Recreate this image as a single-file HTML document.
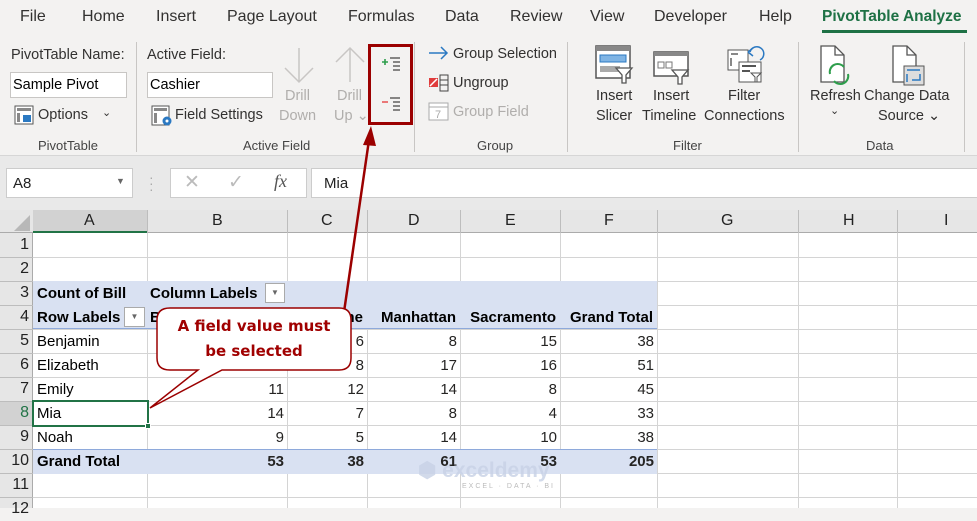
<!DOCTYPE html>
<html><head><meta charset="utf-8"><style>
*{margin:0;padding:0;box-sizing:border-box}
body{width:977px;height:508px;overflow:hidden;background:#f3f2f1;font-family:"Liberation Sans",sans-serif;position:relative;color:#252423}
.a{position:absolute;white-space:nowrap}
.m{font-size:16px;top:8px;color:#323130}
.r{font-size:14.5px;color:#323130}
.g{color:#b0aeac}
.gl{font-size:13px;color:#444;top:138px}
.sep{position:absolute;top:42px;width:1px;height:110px;background:#c8c6c4}
.cell{position:absolute;font-size:15px;color:#000;height:24px;line-height:24px}
.b{font-weight:bold}
</style></head><body>
<!-- menu -->
<div class="a m" style="left:20px">File</div>
<div class="a m" style="left:82px">Home</div>
<div class="a m" style="left:156px">Insert</div>
<div class="a m" style="left:227px">Page Layout</div>
<div class="a m" style="left:348px">Formulas</div>
<div class="a m" style="left:445px">Data</div>
<div class="a m" style="left:510px">Review</div>
<div class="a m" style="left:590px">View</div>
<div class="a m" style="left:654px">Developer</div>
<div class="a m" style="left:759px">Help</div>
<div class="a m" style="left:822px;color:#1e7145;font-weight:bold;font-size:15.5px">PivotTable Analyze</div>
<div class="a" style="left:822px;top:30px;width:145px;height:3px;background:#1e7145"></div>

<!-- ribbon -->
<div class="a r" style="left:11px;top:47px">PivotTable Name:</div>
<div class="a" style="left:10px;top:72px;width:117px;height:26px;background:#fff;border:1px solid #c8c6c4"></div>
<div class="a r" style="left:13px;top:77px;color:#000">Sample Pivot</div>
<svg class="a" style="left:14px;top:105px" width="20" height="20"><rect x="1" y="1" width="18" height="18" fill="#fff" stroke="#555"/><rect x="3" y="3" width="14" height="3" fill="#888"/><rect x="3" y="8" width="3" height="9" fill="#888"/><rect x="9" y="10" width="8" height="7" fill="#2b79c2"/></svg>
<div class="a r" style="left:38px;top:107px">Options</div>
<div class="a r" style="left:102px;top:106px;font-size:11px">&#8964;</div>
<div class="a gl" style="left:38px">PivotTable</div>
<div class="sep" style="left:136px"></div>

<div class="a r" style="left:147px;top:47px">Active Field:</div>
<div class="a" style="left:147px;top:72px;width:126px;height:26px;background:#fff;border:1px solid #c8c6c4"></div>
<div class="a r" style="left:150px;top:77px;color:#000">Cashier</div>
<svg class="a" style="left:151px;top:105px" width="22" height="22"><rect x="1" y="1" width="17" height="19" fill="#fff" stroke="#555"/><rect x="3" y="3" width="13" height="3" fill="#888"/><rect x="3" y="8" width="3" height="10" fill="#888"/><circle cx="16" cy="16" r="4.5" fill="#2b79c2"/><circle cx="16" cy="16" r="1.5" fill="#fff"/></svg>
<div class="a r" style="left:175px;top:107px">Field Settings</div>
<svg class="a" style="left:282px;top:46px" width="34" height="40"><path d="M17 2V36M3 22L17 36L31 22" fill="none" stroke="#c8c6c4" stroke-width="1.5"/></svg>
<div class="a r g" style="left:285px;top:88px">Drill</div>
<div class="a r g" style="left:279px;top:108px">Down</div>
<svg class="a" style="left:333px;top:44px" width="34" height="40"><path d="M17 38V4M3 18L17 4L31 18" fill="none" stroke="#c8c6c4" stroke-width="1.5"/></svg>
<div class="a r g" style="left:337px;top:88px">Drill</div>
<div class="a r g" style="left:334px;top:108px">Up &#8964;</div>
<svg class="a" style="left:380px;top:55px" width="24" height="60"><path d="M2 7H8M5 4V10" stroke="#2e9e4c" stroke-width="1.6"/><path d="M10 3H20M13 7H20M13 11H20M13 15H20" stroke="#444" stroke-width="1.3"/><path d="M2 47H8" stroke="#e85a5a" stroke-width="1.6"/><path d="M10 43H20M13 47H20M13 51H20M13 55H20" stroke="#444" stroke-width="1.3"/></svg>
<div class="a" style="left:368px;top:44px;width:45px;height:81px;border:3px solid #9b0000"></div>
<div class="a gl" style="left:243px">Active Field</div>
<div class="sep" style="left:414px"></div>

<svg class="a" style="left:428px;top:45px" width="22" height="16"><path d="M1 8H19M13 2L19 8L13 14" fill="none" stroke="#2b79c2" stroke-width="1.5"/></svg>
<div class="a r" style="left:453px;top:46px">Group Selection</div>
<svg class="a" style="left:428px;top:74px" width="22" height="18"><rect x="1" y="4" width="9" height="9" fill="#e03c3c"/><path d="M2 12L9 5" stroke="#fff" stroke-width="1.5"/><rect x="12" y="1" width="8" height="16" fill="none" stroke="#444"/><path d="M12 6H20M12 11H20" stroke="#444"/></svg>
<div class="a r" style="left:453px;top:75px">Ungroup</div>
<svg class="a" style="left:428px;top:101px" width="22" height="20"><rect x="1" y="2" width="19" height="17" fill="#fff" stroke="#aaa"/><path d="M1 6H20" stroke="#aaa"/><text x="7" y="17" font-size="11" fill="#aaa" font-family="Liberation Sans">7</text></svg>
<div class="a r g" style="left:453px;top:104px">Group Field</div>
<div class="a gl" style="left:477px">Group</div>
<div class="sep" style="left:567px"></div>

<svg class="a" style="left:594px;top:44px" width="40" height="40"><rect x="2" y="2" width="34" height="32" fill="#fff" stroke="#555" stroke-width="1.5"/><rect x="2" y="2" width="34" height="5" fill="#888"/><rect x="6" y="11" width="26" height="7" fill="#7fb4e4" stroke="#2b79c2"/><rect x="6" y="22" width="20" height="6" fill="#aaa"/><path d="M22 24H38L32 31V39H28V31Z" fill="#fff" stroke="#555" stroke-width="1.3"/></svg>
<div class="a r" style="left:596px;top:88px">Insert</div>
<div class="a r" style="left:596px;top:108px">Slicer</div>
<svg class="a" style="left:652px;top:50px" width="40" height="36"><rect x="2" y="2" width="34" height="24" fill="#fff" stroke="#555" stroke-width="1.5"/><rect x="2" y="2" width="34" height="4" fill="#888"/><rect x="6" y="12" width="6" height="6" fill="none" stroke="#777"/><rect x="14" y="12" width="6" height="6" fill="none" stroke="#777"/><path d="M20 20H36L30 27V34H26V27Z" fill="#fff" stroke="#555" stroke-width="1.3"/></svg>
<div class="a r" style="left:653px;top:88px">Insert</div>
<div class="a r" style="left:642px;top:108px">Timeline</div>
<svg class="a" style="left:726px;top:44px" width="42" height="42"><rect x="2" y="6" width="20" height="20" fill="#fff" stroke="#555"/><path d="M5 10H12M5 14V22" stroke="#888" stroke-width="2"/><path d="M24 8A7 7 0 1 1 34 16" fill="none" stroke="#2b79c2" stroke-width="1.5"/><path d="M22 8L27 4M22 8L27 12" stroke="#2b79c2" stroke-width="1.5"/><rect x="13" y="18" width="22" height="20" fill="#fff" stroke="#555"/><path d="M16 22H30M16 27H24" stroke="#555" stroke-width="2"/><path d="M25 29H35L31 33V38H29V33Z" fill="#fff" stroke="#555"/></svg>
<div class="a r" style="left:728px;top:88px">Filter</div>
<div class="a r" style="left:704px;top:108px">Connections</div>
<div class="a gl" style="left:673px">Filter</div>
<div class="sep" style="left:798px"></div>

<svg class="a" style="left:818px;top:44px" width="36" height="44"><path d="M3 2H17L26 11V38H3Z" fill="#fff" stroke="#555" stroke-width="1.3"/><path d="M17 2V11H26" fill="none" stroke="#555" stroke-width="1.3"/><path d="M12 30A8 8 0 0 1 26 23M30 30A8 8 0 0 1 16 37" fill="none" stroke="#2e9e4c" stroke-width="2"/></svg>
<div class="a r" style="left:810px;top:88px">Refresh</div>
<div class="a r" style="left:830px;top:104px;font-size:11px">&#8964;</div>
<svg class="a" style="left:890px;top:44px" width="36" height="44"><path d="M3 2H17L26 11V38H3Z" fill="#fff" stroke="#555" stroke-width="1.3"/><path d="M17 2V11H26" fill="none" stroke="#555" stroke-width="1.3"/><rect x="14" y="22" width="20" height="19" fill="#ddd" stroke="#555"/><path d="M17 26H30M17 30V38M30 30V36H22" fill="none" stroke="#2b79c2" stroke-width="1.5"/></svg>
<div class="a r" style="left:864px;top:88px">Change Data</div>
<div class="a r" style="left:878px;top:108px">Source &#8964;</div>
<div class="a gl" style="left:866px">Data</div>
<div class="sep" style="left:964px"></div>

<!-- formula bar -->
<div class="a" style="left:0;top:155px;width:977px;height:55px;background:#e9e9e9;border-top:1px solid #d6d6d6"></div>
<div class="a" style="left:6px;top:168px;width:127px;height:30px;background:#fff;border:1px solid #ccc"></div>
<div class="a" style="left:13px;top:175px;font-size:15px;color:#222">A8</div>
<div class="a" style="left:116px;top:176px;font-size:9px;color:#666">&#9660;</div>
<div class="a" style="left:149px;top:174px;font-size:14px;color:#aaa;line-height:6px">·<br>·<br>·</div>
<div class="a" style="left:170px;top:168px;width:137px;height:30px;background:#fff;border:1px solid #ccc"></div>
<div class="a" style="left:184px;top:171px;font-size:19px;color:#bbb">✕</div>
<div class="a" style="left:228px;top:171px;font-size:19px;color:#bbb">✓</div>
<div class="a" style="left:274px;top:171px;font-size:18px;color:#555;font-style:italic;font-family:'Liberation Serif',serif">fx</div>
<div class="a" style="left:311px;top:168px;width:670px;height:30px;background:#fff;border:1px solid #ccc"></div>
<div class="a" style="left:324px;top:175px;font-size:15px;color:#222">Mia</div>

<!-- grid -->
<div class="a" style="left:0;top:210px;width:977px;height:23px;background:#e6e6e6;border-bottom:1px solid #ababab"></div>
<div class="a" style="left:0;top:233px;width:33px;height:275px;background:#e6e6e6;border-right:1px solid #ababab"></div>
<div class="a" style="left:33px;top:233px;width:944px;height:275px;background:#fff"></div>
<svg class="a" style="left:12px;top:213px" width="20" height="20"><path d="M18 2V18H2Z" fill="#b8b8b8"/></svg>
<div class="a" style="left:33px;top:210px;width:114px;height:23px;background:#d2d2d2;border-bottom:2px solid #217346"></div>
<div class="a" style="left:0;top:401px;width:33px;height:24px;background:#d2d2d2"></div>
<svg class="a" style="left:0;top:210px" width="977" height="298">
<g stroke="#d4d4d4">
<path d="M33 47.5H977M33 71.5H977M33 95.5H977M33 119.5H977M33 143.5H977M33 167.5H977M33 191.5H977M33 215.5H977M33 239.5H977M33 263.5H977M33 287.5H977"/>
<path d="M147.5 23V298M287.5 23V298M367.5 23V298M460.5 23V298M560.5 23V298M657.5 23V298M798.5 23V298M897.5 23V298"/>
</g>
<g stroke="#bdbdbd"><path d="M0 47.5H33M0 71.5H33M0 95.5H33M0 119.5H33M0 143.5H33M0 167.5H33M0 191.5H33M0 215.5H33M0 239.5H33M0 263.5H33M0 287.5H33"/><path d="M147.5 0V23M287.5 0V23M367.5 0V23M460.5 0V23M560.5 0V23M657.5 0V23M798.5 0V23M897.5 0V23"/></g>
</svg>
<!-- col headers -->
<div class="a" style="top:212px;font-size:16px;color:#222;left:84px">A</div>
<div class="a" style="top:212px;font-size:16px;color:#222;left:212px">B</div>
<div class="a" style="top:212px;font-size:16px;color:#222;left:321px">C</div>
<div class="a" style="top:212px;font-size:16px;color:#222;left:408px">D</div>
<div class="a" style="top:212px;font-size:16px;color:#222;left:505px">E</div>
<div class="a" style="top:212px;font-size:16px;color:#222;left:604px">F</div>
<div class="a" style="top:212px;font-size:16px;color:#222;left:721px">G</div>
<div class="a" style="top:212px;font-size:16px;color:#222;left:843px">H</div>
<div class="a" style="top:212px;font-size:16px;color:#222;left:944px">I</div>
<!-- row numbers -->
<div class="a" style="left:0;top:233px;width:29px;text-align:right;font-size:16px;color:#222;line-height:24px">1<br>2<br>3<br>4<br>5<br>6<br>7<br><span style="color:#217346">8</span><br>9<br>10<br>11<br>12</div>

<!-- pivot shading -->
<div class="a" style="left:33px;top:281px;width:624px;height:48px;background:#d9e1f2;border-bottom:1px solid #8ea9db"></div>
<div class="a" style="left:33px;top:449px;width:624px;height:25px;background:#d9e1f2;border-top:1px solid #8ea9db"></div>
<div class="a" style="left:265px;top:283px;width:20px;height:20px;background:#fff;border:1px solid #aaa;font-size:8px;color:#666;text-align:center;line-height:18px">&#9660;</div>
<div class="a" style="left:124px;top:307px;width:21px;height:20px;background:#fff;border:1px solid #aaa;font-size:8px;color:#666;text-align:center;line-height:18px">&#9660;</div>

<div class="cell b" style="left:37px;top:282px">Count of Bill</div>
<div class="cell b" style="left:150px;top:282px">Column Labels</div>
<div class="cell b" style="left:37px;top:306px">Row Labels</div>
<div class="cell b" style="left:150px;top:306px">Bronx</div>
<div class="cell b" style="right:614px;top:306px">Rome</div>
<div class="cell b" style="right:521px;top:306px">Manhattan</div>
<div class="cell b" style="right:421px;top:306px">Sacramento</div>
<div class="cell b" style="right:324px;top:306px">Grand Total</div>

<div class="cell" style="left:37px;top:330px">Benjamin</div>
<div class="cell" style="left:37px;top:354px">Elizabeth</div>
<div class="cell" style="left:37px;top:378px">Emily</div>
<div class="cell" style="left:37px;top:402px">Mia</div>
<div class="cell" style="left:37px;top:426px">Noah</div>
<div class="cell b" style="left:37px;top:450px">Grand Total</div>

<div class="a" style="right:693px;top:330px;text-align:right;font-size:15px;line-height:24px">9<br>10<br>11<br>14<br>9<br><b>53</b></div>
<div class="a" style="right:613px;top:330px;text-align:right;font-size:15px;line-height:24px">6<br>8<br>12<br>7<br>5<br><b>38</b></div>
<div class="a" style="right:520px;top:330px;text-align:right;font-size:15px;line-height:24px">8<br>17<br>14<br>8<br>14<br><b>61</b></div>
<div class="a" style="right:420px;top:330px;text-align:right;font-size:15px;line-height:24px">15<br>16<br>8<br>4<br>10<br><b>53</b></div>
<div class="a" style="right:323px;top:330px;text-align:right;font-size:15px;line-height:24px">38<br>51<br>45<br>33<br>38<br><b>205</b></div>

<!-- selected cell -->
<div class="a" style="left:32px;top:400px;width:117px;height:27px;border:2px solid #217346"></div>
<div class="a" style="left:145px;top:423px;width:6px;height:6px;background:#217346;border:1px solid #fff"></div>

<!-- watermark -->
<div class="a" style="left:418px;top:458px;font-size:21px;font-weight:bold;color:#c8d2e6;opacity:.8">⬢ exceldemy</div>
<div class="a" style="left:462px;top:483px;font-size:7px;color:#bbb;letter-spacing:2px">EXCEL · DATA · BI</div>

<!-- arrow + callout -->
<svg class="a" style="left:0;top:0" width="977" height="508">
<path d="M344 312L369 140" stroke="#9b0000" stroke-width="2.5"/>
<path d="M371 126L363 145L376 146Z" fill="#9b0000"/>
<path d="M170 308H339Q351 308 351 320V358Q351 370 339 370H222L150 408L198 370H170Q157 370 157 358V320Q157 308 170 308Z" fill="#fff" stroke="#9b0000" stroke-width="1.5"/>
</svg>
<div class="a" style="left:157px;top:314px;width:194px;text-align:center;font-family:'DejaVu Sans',sans-serif;font-weight:bold;font-size:15px;color:#a00000;line-height:25px">A field value must<br>be selected</div>
</body></html>
